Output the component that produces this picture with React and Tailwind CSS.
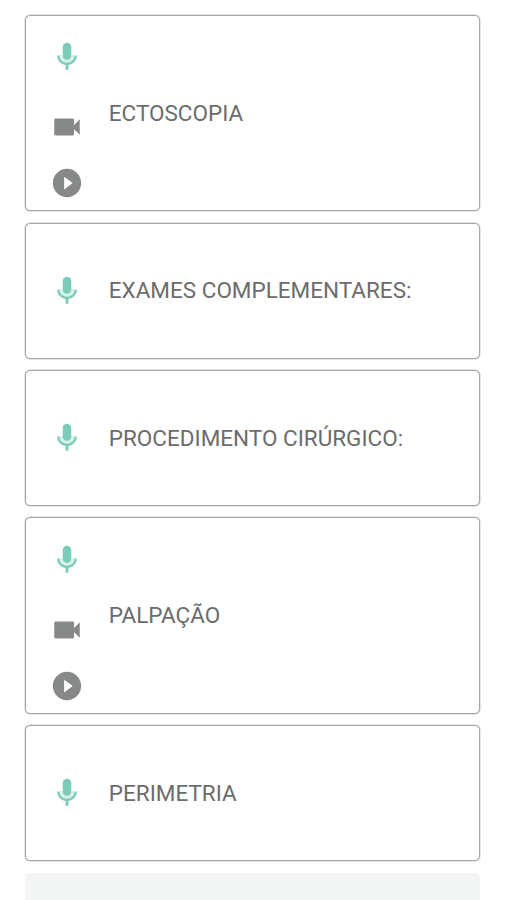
import React from 'react';

const fields = [
  { label: 'ECTOSCOPIA', media: true },
  { label: 'EXAMES COMPLEMENTARES:' },
  { label: 'PROCEDIMENTO CIRÚRGICO:' },
  { label: 'PALPAÇÃO', media: true },
  { label: 'PERIMETRIA' },
];

function MicIcon() {
  return (
    <svg className="h-[34px] w-[34px] shrink-0 text-[#7bcbb9]" viewBox="0 0 24 24" fill="currentColor">
      <path className="text-[#d9f1eb]" d="M6.7 10.5h10.6c0 3.5-2.5 5.8-5.3 5.8s-5.3-2.3-5.3-5.8z" />
      <path d="M12 14c1.66 0 3-1.34 3-3V5c0-1.66-1.34-3-3-3S9 3.34 9 5v6c0 1.66 1.34 3 3 3zm5.3-3c0 3-2.54 5.1-5.3 5.1S6.7 14 6.7 11H5c0 3.41 2.72 6.23 6 6.72V21h2v-3.28c3.28-.48 6-3.3 6-6.72h-1.7z" />
    </svg>
  );
}

function VideoIcon() {
  return (
    <svg className="h-[34px] w-[34px] shrink-0" viewBox="0 0 24 24" fill="currentColor">
      <path d="M17 10.5V7c0-.55-.45-1-1-1H4c-.55 0-1 .45-1 1v10c0 .55.45 1 1 1h12c.55 0 1-.45 1-1v-3.5l4 4v-11l-4 4z" />
    </svg>
  );
}

function PlayIcon() {
  return (
    <svg className="h-[34px] w-[34px] shrink-0" viewBox="0 0 24 24" fill="currentColor">
      <path d="M12 2C6.48 2 2 6.48 2 12s4.48 10 10 10 10-4.48 10-10S17.52 2 12 2zm-2 14.5v-9l6 4.5-6 4.5z" />
    </svg>
  );
}

function FieldCard({ label, media }) {
  return (
    <div className={`flex shrink-0 rounded-[5px] border border-[#a6a6a6] bg-white shadow-[0_0_0_0.5px_#cccccc] ${media ? 'h-[196.4px]' : 'h-[136px]'}`}>
      <div className={`flex w-[83px] shrink-0 flex-col items-center pr-[1.5px] text-[#878988] ${media ? 'pt-[24.4px]' : 'justify-center'}`}>
        <MicIcon />
        {media && (
          <div className="mt-[35.8px] flex flex-col gap-[22.5px]">
            <VideoIcon />
            <PlayIcon />
          </div>
        )}
      </div>
      <span className="self-center text-[22.5px] leading-none">{label}</span>
    </div>
  );
}

export default function App() {
  return (
    <div className="flex h-[900px] w-[507px] flex-col gap-[11.4px] overflow-hidden bg-white pt-[14.8px] pr-[27px] pl-[24.8px] font-['Roboto',sans-serif] text-[#6c6c6c]">
      {fields.map((field) => (
        <FieldCard key={field.label} {...field} />
      ))}
      <div className="h-10 shrink-0 rounded-t-[5px] bg-[#f3f5f4]" />
    </div>
  );
}
